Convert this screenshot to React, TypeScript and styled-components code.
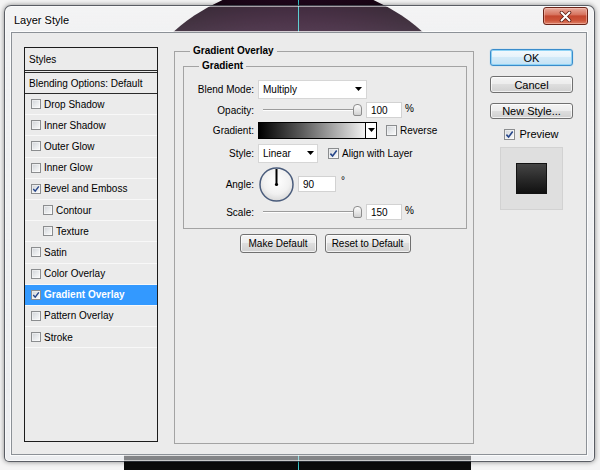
import React from "react";
import styled, { createGlobalStyle } from "styled-components";

const GlobalStyle = createGlobalStyle`
  html, body { margin: 0; padding: 0; background: #f3f3f3; }
  body { font-family: "Liberation Sans", Arial, sans-serif; color: #000; }
  *, *::before, *::after { box-sizing: border-box; }
`;

const UI_FONT = `"Liberation Sans", Arial, sans-serif`;

/* ---------- desktop backdrop ---------- */
const Stage = styled.div`
  position: relative;
  width: 600px;
  height: 470px;
  overflow: hidden;
  background: #f4f4f4;
  padding: 5px 0 0 4px;
`;

const DarkDisc = styled.div`
  position: absolute;
  left: 112px;
  top: -16px;
  width: 372px;
  height: 372px;
  border-radius: 50%;
  background: radial-gradient(circle at 50% 50%, #3a0c31 0%, #270822 55%, #0e020b 82%, #030303 100%);
`;

const DarkBase = styled.div`
  position: absolute;
  left: 124px;
  top: 452px;
  width: 347px;
  height: 30px;
  background: #0b0b0b;
`;

const CyanLine = styled.div`
  position: absolute;
  left: 298px;
  top: 0;
  width: 1px;
  height: 470px;
  background: #3cc8cc;
`;

/* ---------- window frame ---------- */
const Window = styled.div`
  position: relative;
  z-index: 1;
  width: 591px;
  height: 457px;
  border: 1px solid rgba(40, 44, 52, 0.75);
  border-radius: 7px 7px 5px 5px;
  background: linear-gradient(180deg, rgba(240, 242, 246, 0.16) 0%, rgba(232, 235, 240, 0.24) 7%, rgba(230, 233, 238, 0.55) 100%);
  box-shadow: inset 0 0 0 1px rgba(255, 255, 255, 0.55), 0 0 5px rgba(0, 0, 0, 0.45);
  display: flex;
  flex-direction: column;
  padding: 0 7px 6px 6px;
`;

const TitleBar = styled.div`
  height: 26px;
  display: flex;
  justify-content: space-between;
  align-items: flex-start;
`;

const Caption = styled.div`
  padding: 7px 0 0 3px;
  font-family: ${UI_FONT};
  font-size: 11px;
  line-height: 14px;
  color: #000;
  text-shadow: 0 0 6px #fff, 0 0 3px #fff;
`;

const CloseButton = styled.div`
  width: 45px;
  height: 18px;
  margin: 1px -1px 0 0;
  border: 1px solid #6b2418;
  border-radius: 3px;
  background: linear-gradient(180deg, #e8aa9c 0%, #d7735e 42%, #c4472f 50%, #cd553a 78%, #de8169 100%);
  box-shadow: inset 0 0 0 1px rgba(255, 210, 200, 0.45);
  display: flex;
  align-items: center;
  justify-content: center;
`;

const Client = styled.div`
  flex: 1;
  display: flex;
  align-items: flex-start;
  background: #ebebeb;
  border: 1px solid #8c9197;
  box-shadow: 0 0 0 1px rgba(255, 255, 255, 0.75);
  padding: 12px 11px 0 12px;
  font-family: ${UI_FONT};
  font-size: 10px;
`;

/* ---------- left style list ---------- */
const StyleList = styled.div`
  width: 134px;
  height: 395px;
  margin-top: 2px;
  border: 1px solid #1c1c1c;
  display: flex;
  flex-direction: column;
`;

const ListHeader = styled.div`
  height: 23px;
  padding-left: 4px;
  display: flex;
  align-items: center;
  border-bottom: 1px solid #2a2a2a;
`;

const BlendRow = styled.div`
  height: 22px;
  margin-top: 1px;
  padding-left: 4px;
  display: flex;
  align-items: center;
  border-top: 1px solid #2a2a2a;
  border-bottom: 1px solid #2a2a2a;
`;

const StyleRow = styled.div<{ $indent: boolean; $active: boolean }>`
  height: 21.2px;
  flex: none;
  display: flex;
  align-items: center;
  gap: 3px;
  padding-left: ${(p) => (p.$indent ? 18 : 6)}px;
  border-bottom: 1px solid #f8f8f8;
  background: ${(p) => (p.$active ? "#3399ff" : "transparent")};
  color: ${(p) => (p.$active ? "#fff" : "#000")};
  font-weight: ${(p) => (p.$active ? "bold" : "normal")};
`;

/* ---------- checkbox ---------- */
const Box = styled.span<{ $size: number }>`
  width: ${(p) => p.$size}px;
  height: ${(p) => p.$size}px;
  flex: none;
  display: inline-flex;
  align-items: center;
  justify-content: center;
  border: 1px solid #8b8d8f;
  background: linear-gradient(135deg, #cfd2d6 0%, #e9ebed 55%, #fafafa 100%);
  box-shadow: inset 0 0 0 1px rgba(255, 255, 255, 0.45);
`;

function Check({ checked, size = 11 }: { checked?: boolean; size?: number }) {
  return (
    <Box $size={size}>
      {checked && (
        <svg width={size - 2} height={size - 2} viewBox="0 0 9 9">
          <path d="M1.4 4.6 L3.6 7 L7.7 1.5" stroke="#26468a" strokeWidth="1.6" fill="none" />
        </svg>
      )}
    </Box>
  );
}

/* ---------- group boxes ---------- */
const Group = styled.fieldset`
  margin: 0 0 0 16px;
  width: 300px;
  height: 399px;
  min-width: 0;
  border: 1px solid #a3a3a3;
  padding: 3px 6px 0 8px;
`;

const InnerGroup = styled.fieldset`
  margin: 0;
  min-width: 0;
  border: 1px solid #a3a3a3;
  padding: 0 0 7px 0;
`;

const Legend = styled.legend<{ $offset: number }>`
  margin-left: ${(p) => p.$offset}px;
  padding: 0 3px;
  font-weight: bold;
  font-size: 10px;
  line-height: 12px;
`;

const FormRow = styled.div<{ $h: number; $mt: number }>`
  height: ${(p) => p.$h}px;
  margin-top: ${(p) => p.$mt}px;
  display: flex;
  align-items: center;
`;

const Label = styled.div`
  width: 70px;
  margin-right: 4px;
  text-align: right;
  flex: none;
`;

const Select = styled.div<{ $w: number; $pr: number }>`
  width: ${(p) => p.$w}px;
  height: 19px;
  background: #fff;
  border: 1px solid #d6d6d6;
  display: flex;
  align-items: center;
  justify-content: space-between;
  padding: 0 ${(p) => p.$pr}px 0 4px;
`;

const Arrow = () => (
  <svg width="7" height="4" viewBox="0 0 7 4">
    <polygon points="0,0 7,0 3.5,4" fill="#000" />
  </svg>
);

const SliderBox = styled.div`
  position: relative;
  width: 104px;
  height: 18px;
  margin-right: 4px;
  flex: none;
`;

const Track = styled.div`
  position: absolute;
  left: 5px;
  right: 8px;
  top: 8px;
  height: 2px;
  border-top: 1px solid #9c9c9c;
  border-bottom: 1px solid #fdfdfd;
`;

const Thumb = styled.div`
  position: absolute;
  top: 3px;
  width: 9px;
  height: 12px;
  border: 1px solid #8d8d8d;
  border-radius: 4px 4px 2px 2px;
  background: linear-gradient(180deg, #fdfdfd 0%, #e4e4e4 60%, #d0d0d0 100%);
`;

function Slider({ value, max }: { value: number; max: number }) {
  const left = 5 + (Math.min(value, max) / max) * 90;
  return (
    <SliderBox>
      <Track />
      <Thumb style={{ left: `${left}px` }} />
    </SliderBox>
  );
}

const NumBox = styled.div<{ $w: number }>`
  width: ${(p) => p.$w}px;
  height: 16px;
  flex: none;
  background: #fff;
  border: 1px solid #d2d2d2;
  padding-left: 4px;
  display: flex;
  align-items: center;
`;

const Unit = styled.span<{ $ml: number; $raise?: number }>`
  margin-left: ${(p) => p.$ml}px;
  position: relative;
  top: ${(p) => -(p.$raise ?? 0)}px;
`;

const GradientBar = styled.div`
  width: 119px;
  height: 17px;
  border: 1px solid #000;
  display: flex;
`;

const GradientFill = styled.div`
  flex: 1;
  background: linear-gradient(90deg, #000 0%, #5a5a5a 40%, #f2f2f2 100%);
  border-right: 1px solid #000;
`;

const GradientDrop = styled.div`
  width: 10px;
  background: #fff;
  display: flex;
  align-items: center;
  justify-content: center;
`;

const CheckLabel = styled.label<{ $ml: number; $gap: number }>`
  margin-left: ${(p) => p.$ml}px;
  display: flex;
  align-items: center;
  gap: ${(p) => p.$gap}px;
`;

function AngleDial({ angle }: { angle: number }) {
  const r = 16.5;
  const c = 17.5;
  const rad = (angle * Math.PI) / 180;
  const x = c + Math.cos(rad) * (r - 1);
  const y = c - Math.sin(rad) * (r - 1);
  return (
    <svg width="35" height="35" viewBox="0 0 35 35" style={{ marginLeft: 1, marginRight: 4, flex: "none" }}>
      <defs>
        <radialGradient id="dialFill" cx="50%" cy="40%" r="60%">
          <stop offset="0%" stopColor="#ffffff" />
          <stop offset="65%" stopColor="#f1f1f1" />
          <stop offset="100%" stopColor="#d9d9d9" />
        </radialGradient>
      </defs>
      <circle cx={c} cy={c} r={r} fill="url(#dialFill)" stroke="#4a5c7c" strokeWidth="1.5" />
      <line x1={c} y1={c} x2={x} y2={y} stroke="#000" strokeWidth="2" />
      <circle cx={c} cy={c} r="1.6" fill="#000" />
    </svg>
  );
}

const ButtonRow = styled.div`
  margin-top: 5px;
  display: flex;
  justify-content: center;
  gap: 8px;
`;

const PushButton = styled.button<{ $w: number; $h: number; $fs: number; $primary?: boolean }>`
  width: ${(p) => p.$w}px;
  height: ${(p) => p.$h}px;
  padding: 0;
  font-family: ${UI_FONT};
  font-size: ${(p) => p.$fs}px;
  color: #000;
  border-radius: 3px;
  border: 1px solid ${(p) => (p.$primary ? "#3a8ccb" : "#707070")};
  background: ${(p) =>
    p.$primary
      ? "linear-gradient(180deg, #f3f9fd 0%, #e6f3fb 49%, #d3eaf8 50%, #c4e2f5 100%)"
      : "linear-gradient(180deg, #f4f4f4 0%, #ececec 49%, #dedede 50%, #d0d0d0 100%)"};
  box-shadow: ${(p) =>
    p.$primary
      ? "inset 0 0 0 1px #8fd3f5, 0 0 1px #5ab4e8"
      : "inset 0 0 0 1px rgba(255,255,255,0.7)"};
  display: flex;
  align-items: center;
  justify-content: center;
`;

/* ---------- right column ---------- */
const RightCol = styled.div`
  width: 83px;
  margin: 4px 0 0 16px;
  display: flex;
  flex-direction: column;
  align-items: center;
  font-size: 11px;
`;

const Stack = styled.div<{ $mt: number }>`
  margin-top: ${(p) => p.$mt}px;
`;

const PreviewRow = styled.label`
  margin-top: 8px;
  height: 14px;
  display: flex;
  align-items: center;
  gap: 4px;
`;

const PreviewBox = styled.div`
  margin-top: 6px;
  width: 63px;
  height: 63px;
  background: #dfdfdf;
  border: 1px solid #d2d2d2;
  display: flex;
  align-items: center;
  justify-content: center;
`;

const PreviewSwatch = styled.div`
  width: 31px;
  height: 31px;
  border: 1px solid #121212;
  background: linear-gradient(180deg, #454545 0%, #2a2a2a 50%, #111 100%);
`;

const STYLES = [
  { label: "Drop Shadow" },
  { label: "Inner Shadow" },
  { label: "Outer Glow" },
  { label: "Inner Glow" },
  { label: "Bevel and Emboss", checked: true },
  { label: "Contour", indent: true },
  { label: "Texture", indent: true },
  { label: "Satin" },
  { label: "Color Overlay" },
  { label: "Gradient Overlay", checked: true, active: true },
  { label: "Pattern Overlay" },
  { label: "Stroke" },
];

export default function App() {
  return (
    <>
      <GlobalStyle />
      <Stage>
        <DarkDisc />
        <DarkBase />
        <CyanLine />
        <Window>
          <TitleBar>
            <Caption>Layer Style</Caption>
            <CloseButton>
              <svg width="13" height="11" viewBox="0 0 13 11">
                <path d="M2.5 1.5 L10.5 9.5 M10.5 1.5 L2.5 9.5" stroke="#5a1a10" strokeWidth="3.6" strokeLinecap="round" />
                <path d="M2.5 1.5 L10.5 9.5 M10.5 1.5 L2.5 9.5" stroke="#fff" strokeWidth="2" strokeLinecap="round" />
              </svg>
            </CloseButton>
          </TitleBar>
          <Client>
            <StyleList>
              <ListHeader>Styles</ListHeader>
              <BlendRow>Blending Options: Default</BlendRow>
              {STYLES.map((s) => (
                <StyleRow key={s.label} $indent={!!s.indent} $active={!!s.active}>
                  <Check checked={s.checked} size={10} />
                  <span>{s.label}</span>
                </StyleRow>
              ))}
            </StyleList>

            <Group>
              <Legend $offset={7}>Gradient Overlay</Legend>
              <InnerGroup>
                <Legend $offset={15}>Gradient</Legend>
                <FormRow $h={20} $mt={7}>
                  <Label>Blend Mode:</Label>
                  <Select $w={109} $pr={4}>
                    <span>Multiply</span>
                    <Arrow />
                  </Select>
                </FormRow>
                <FormRow $h={18} $mt={2}>
                  <Label>Opacity:</Label>
                  <Slider value={100} max={100} />
                  <NumBox $w={36}>100</NumBox>
                  <Unit $ml={3} $raise={2}>%</Unit>
                </FormRow>
                <FormRow $h={18} $mt={2}>
                  <Label>Gradient:</Label>
                  <GradientBar>
                    <GradientFill />
                    <GradientDrop>
                      <Arrow />
                    </GradientDrop>
                  </GradientBar>
                  <CheckLabel $ml={9} $gap={3}>
                    <Check />
                    <span>Reverse</span>
                  </CheckLabel>
                </FormRow>
                <FormRow $h={20} $mt={4}>
                  <Label>Style:</Label>
                  <Select $w={60} $pr={3}>
                    <span>Linear</span>
                    <Arrow />
                  </Select>
                  <CheckLabel $ml={10} $gap={3}>
                    <Check checked />
                    <span>Align with Layer</span>
                  </CheckLabel>
                </FormRow>
                <FormRow $h={36} $mt={3}>
                  <Label>Angle:</Label>
                  <AngleDial angle={90} />
                  <NumBox $w={38}>90</NumBox>
                  <Unit $ml={5} $raise={4}>°</Unit>
                </FormRow>
                <FormRow $h={18} $mt={1}>
                  <Label>Scale:</Label>
                  <Slider value={150} max={150} />
                  <NumBox $w={36}>150</NumBox>
                  <Unit $ml={3} $raise={2}>%</Unit>
                </FormRow>
              </InnerGroup>
              <ButtonRow>
                <PushButton $w={77} $h={19} $fs={10}>Make Default</PushButton>
                <PushButton $w={86} $h={19} $fs={10}>Reset to Default</PushButton>
              </ButtonRow>
            </Group>

            <RightCol>
              <PushButton $w={83} $h={17} $fs={11} $primary>OK</PushButton>
              <Stack $mt={10}>
                <PushButton $w={83} $h={17} $fs={11}>Cancel</PushButton>
              </Stack>
              <Stack $mt={10}>
                <PushButton $w={83} $h={16} $fs={11}>New Style...</PushButton>
              </Stack>
              <PreviewRow>
                <Check checked />
                <span>Preview</span>
              </PreviewRow>
              <PreviewBox>
                <PreviewSwatch />
              </PreviewBox>
            </RightCol>
          </Client>
        </Window>
      </Stage>
    </>
  );
}
